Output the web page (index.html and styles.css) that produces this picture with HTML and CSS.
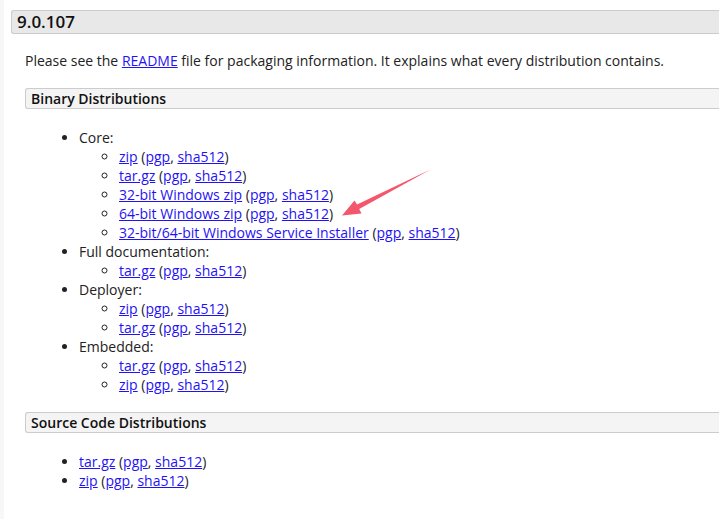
FILE: index.html
```html
<!DOCTYPE html>
<html>
<head>
<meta charset="utf-8">
<link rel="stylesheet" href="styles.css">
</head>
<body>
<div class="page">
  <h3 class="version">9.0.107</h3>
  <div class="section">
    <p class="intro">Please see the <a href="#">README</a> file for packaging information. It explains what every distribution contains.</p>
    <h4 class="sub">Binary Distributions</h4>
    <ul class="outer first">
      <li>Core:
        <ul class="inner">
          <li><a href="#">zip</a> (<a href="#">pgp</a>, <a href="#">sha512</a>)</li>
          <li><a href="#">tar.gz</a> (<a href="#">pgp</a>, <a href="#">sha512</a>)</li>
          <li><a href="#">32-bit Windows zip</a> (<a href="#">pgp</a>, <a href="#">sha512</a>)</li>
          <li><a href="#">64-bit Windows zip</a> (<a href="#">pgp</a>, <a href="#">sha512</a>)</li>
          <li><a href="#">32-bit/64-bit Windows Service Installer</a> (<a href="#">pgp</a>, <a href="#">sha512</a>)</li>
        </ul>
      </li>
      <li>Full documentation:
        <ul class="inner">
          <li><a href="#">tar.gz</a> (<a href="#">pgp</a>, <a href="#">sha512</a>)</li>
        </ul>
      </li>
      <li>Deployer:
        <ul class="inner">
          <li><a href="#">zip</a> (<a href="#">pgp</a>, <a href="#">sha512</a>)</li>
          <li><a href="#">tar.gz</a> (<a href="#">pgp</a>, <a href="#">sha512</a>)</li>
        </ul>
      </li>
      <li>Embedded:
        <ul class="inner">
          <li><a href="#">tar.gz</a> (<a href="#">pgp</a>, <a href="#">sha512</a>)</li>
          <li><a href="#">zip</a> (<a href="#">pgp</a>, <a href="#">sha512</a>)</li>
        </ul>
      </li>
    </ul>
    <h4 class="sub">Source Code Distributions</h4>
    <ul class="outer">
      <li><a href="#">tar.gz</a> (<a href="#">pgp</a>, <a href="#">sha512</a>)</li>
      <li><a href="#">zip</a> (<a href="#">pgp</a>, <a href="#">sha512</a>)</li>
    </ul>
  </div>
</div>
<svg class="arrow" width="719" height="519" viewBox="0 0 719 519">
  <polygon points="342,215.5 354.5,200.5 357,204.6 431,169.3 359.2,209 361.5,213.5" fill="#f4566c"/>
</svg>
</body>
</html>
```
FILE: styles.css
```css
html, body {
  margin: 0;
  padding: 0;
  background: #fff;
}
body {
  font-family: "Open Sans", "Noto Sans", sans-serif;
  font-size: 14px;
  line-height: 19px;
  color: #222;
  overflow: hidden;
  height: 519px;
}
.page {
  border-left: 4px solid #f7f7f7;
  padding-top: 10px;
  min-height: 509px;
}
a {
  color: #1f12f5;
  text-decoration: underline;
}
.version {
  margin: 0 0 0 7px;
  height: 22px;
  line-height: 22px;
  font-size: 17px;
  font-weight: 600;
  color: #111;
  padding-left: 5px;
  background: #e8e8e8;
  border: 1px solid #cccccc;
  border-right: none;
  border-radius: 3px 0 0 3px;
}
.section {
  padding-left: 21px;
}
.intro {
  margin: 17px 0 18px 0;
}
.sub {
  margin: 0;
  height: 19px;
  line-height: 19px;
  font-size: 14px;
  font-weight: 600;
  color: #111;
  padding-left: 5px;
  background: #f4f4f4;
  border: 1px solid #cccccc;
  border-right: none;
  border-radius: 3px 0 0 3px;
}
.outer {
  margin: 19px 0 19px 0;
  padding-left: 54px;
  list-style: disc;
}
.outer.first {
  margin-bottom: 18px;
}
.inner {
  margin: 0;
  padding-left: 40px;
  list-style: circle;
}
.arrow {
  position: absolute;
  left: 0;
  top: 0;
  pointer-events: none;
}
```
